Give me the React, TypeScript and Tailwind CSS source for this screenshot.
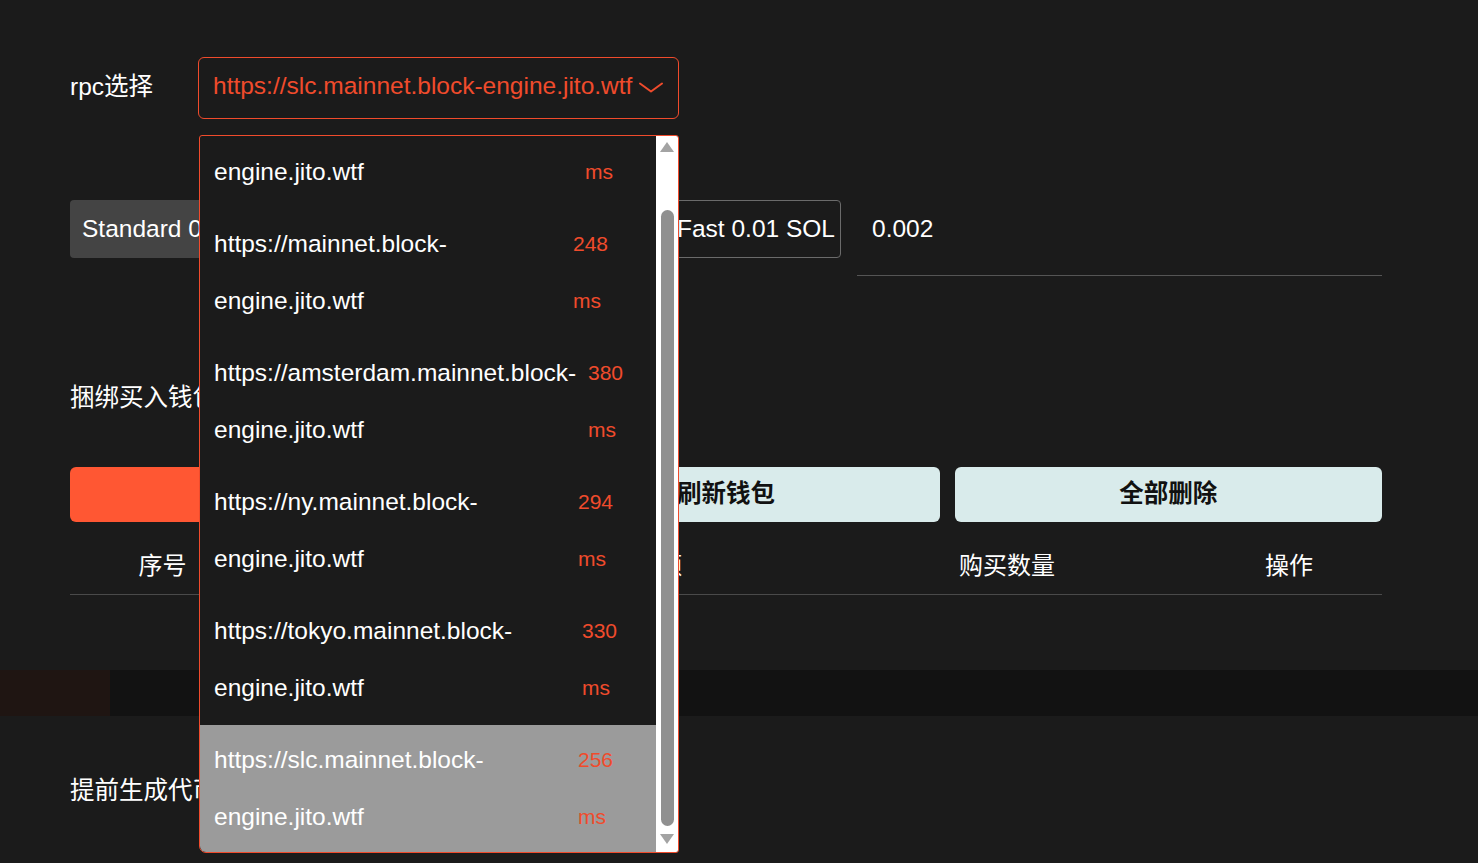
import { useState } from "react"

const FONT = "font-['Liberation_Sans','Noto_Sans_CJK_SC',sans-serif]"

const rpcOptions = [
  { url: "https://frankfurt.mainnet.block-", host: "engine.jito.wtf", ms: "312", col: "w-[371px]" },
  { url: "https://mainnet.block-", host: "engine.jito.wtf", ms: "248", col: "w-[359px]" },
  { url: "https://amsterdam.mainnet.block-", host: "engine.jito.wtf", ms: "380", col: "w-[374px]" },
  { url: "https://ny.mainnet.block-", host: "engine.jito.wtf", ms: "294", col: "w-[364px]" },
  { url: "https://tokyo.mainnet.block-", host: "engine.jito.wtf", ms: "330", col: "w-[368px]" },
  { url: "https://slc.mainnet.block-", host: "engine.jito.wtf", ms: "256", col: "w-[364px]", active: true },
]

function Chevron() {
  return (
    <svg width="24" height="12" viewBox="0 0 24 12" fill="none" aria-hidden="true">
      <polyline points="1,1.5 12,9.5 23,1.5" stroke="#f04b2c" strokeWidth="2" strokeLinecap="round" strokeLinejoin="round" />
    </svg>
  )
}

function RpcDropdown() {
  return (
    <div className="absolute left-[1px] top-[calc(100%+16px)] z-20 flex h-[718px] w-[480px] overflow-hidden rounded-[3px] rounded-bl-[7px] border border-[#f04b2c] bg-[#1b1b1b]">
      <div className="flex-1 overflow-hidden">
        <ul className="-mt-[56px]">
          {rpcOptions.map((o) => (
            <li
              key={o.url}
              className={`flex pb-[9px] pl-[14px] pt-[6px] leading-[57px] ${o.active ? "bg-[#9b9b9b]" : ""}`}
            >
              <div className={`${o.col} shrink-0 text-white`}>
                <div>{o.url}</div>
                <div>{o.host}</div>
              </div>
              <div className="text-[21px] text-[#f04b2c]">
                <div>{o.ms}</div>
                <div>ms</div>
              </div>
            </li>
          ))}
        </ul>
      </div>
      {/* scrollbar */}
      <div className="flex w-[22px] flex-col items-center bg-white">
        <svg width="14" height="10" viewBox="0 0 14 10" className="mt-[6px]" aria-hidden="true">
          <polygon points="7,0 14,10 0,10" fill="#a3a3a3" />
        </svg>
        <div className="mt-[58px] h-[616px] w-[13px] rounded-full bg-[#909090]" />
        <svg width="14" height="10" viewBox="0 0 14 10" className="mt-[8px]" aria-hidden="true">
          <polygon points="0,0 14,0 7,10" fill="#a3a3a3" />
        </svg>
      </div>
    </div>
  )
}

export default function App() {
  const [rpc] = useState("https://slc.mainnet.block-engine.jito.wtf")

  return (
    <div className={`min-h-[863px] overflow-hidden bg-[#1b1b1b] text-[24.5px] text-white ${FONT}`}>
      <div className="w-[1382px] pl-[70px] pt-[57px]">
        {/* rpc */}
        <div className="flex items-center">
          <span className="w-[128px] pb-[2px]">rpc选择</span>
          <div className="relative">
            <div className="flex h-[62px] w-[481px] items-center justify-between whitespace-nowrap rounded-[6px] border border-[#f04b2c] pb-[3px] pl-[14px] pr-[15px] text-[#f04b2c]">
              <span>{rpc}</span>
              <span className="pt-[3px]">
                <Chevron />
              </span>
            </div>
            <RpcDropdown />
          </div>
        </div>

        {/* priority fee */}
        <div className="mt-[81px] flex items-start whitespace-nowrap">
          <button className="h-[58px] w-[247px] rounded-[4px] bg-[#444444] px-3 text-left">Standard 0.005 SOL</button>
          <button className="ml-[16px] h-[58px] w-[316px] rounded-[4px] border border-[#6b6b6b] px-3 text-left">Turbo 0.006 SOL</button>
          <button className="ml-[16px] h-[58px] w-[176px] rounded-[4px] border border-[#6b6b6b] px-[11px] text-left">Fast 0.01 SOL</button>
          <div className="ml-[16px] flex h-[76px] flex-1 items-start border-b border-[#555555] pl-[15px] pt-[11px]">0.002</div>
        </div>

        <div className="mt-[105px] leading-[34px]">捆绑买入钱包列表</div>

        <div className="mt-[52px] grid grid-cols-3 gap-[15px] font-bold text-[#111111]">
          <button className="h-[55px] rounded-[6px] bg-[#ff5733]">导入钱包</button>
          <button className="h-[55px] rounded-[6px] bg-[#d9ebeb]">刷新钱包</button>
          <button className="h-[55px] rounded-[6px] bg-[#d9ebeb]">全部删除</button>
        </div>

        <div className="mt-[15px] grid h-[58px] grid-cols-[185px_300px_300px_304px_1fr] items-center whitespace-nowrap border-b border-[#4a4a4a] text-center text-[24px]">
          <span>序号</span>
          <span>钱包地址</span>
          <span className="pr-[173px] text-right">钱包余额</span>
          <span>购买数量</span>
          <span className="pl-[37px]">操作</span>
        </div>
      </div>

      <div className="mt-[75px] flex h-[46px] bg-[#121212]">
        <div className="w-[110px] bg-[#1f1512]" />
      </div>

      <div className="pl-[70px] pt-[58px] leading-[34px]">提前生成代币地址</div>
    </div>
  )
}
